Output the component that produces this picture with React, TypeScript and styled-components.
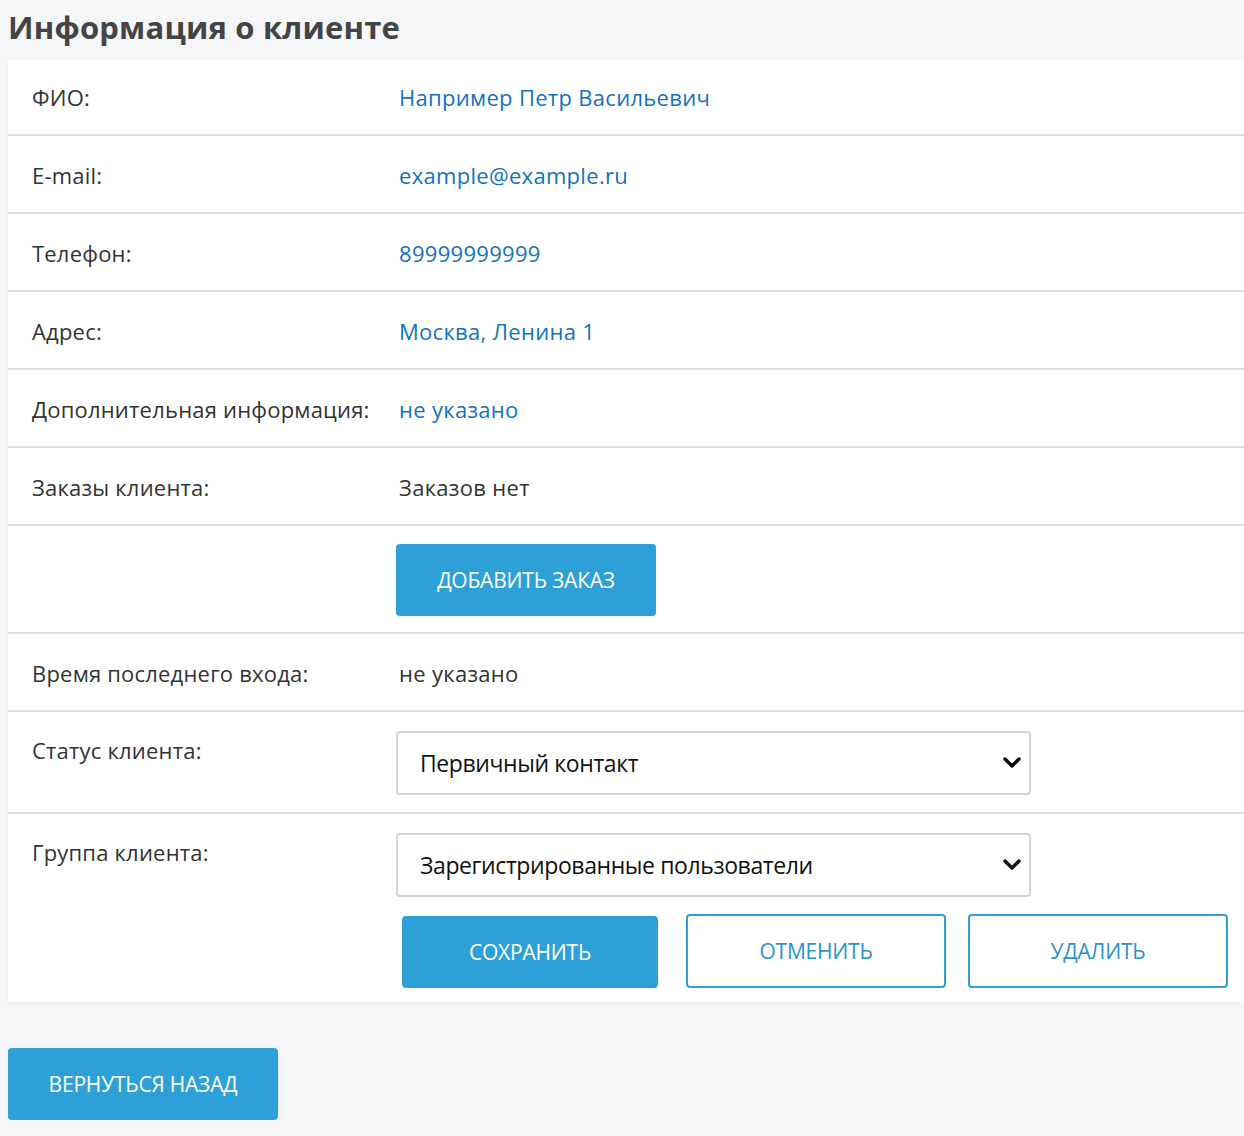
import React from "react";
import styled, { createGlobalStyle } from "styled-components";

const GlobalStyle = createGlobalStyle`
  html, body { margin: 0; padding: 0; background: #f4f6f8; }
  body { font-family: "Open Sans", "Liberation Sans", sans-serif; color: #333; }
`;

const Page = styled.div`
  padding: 8px 0 16px 8px;
  display: flex;
  flex-direction: column;
  align-items: flex-start;
`;

const Title = styled.h1`
  margin: 0 0 14px 0;
  font-family: "Open Sans", sans-serif;
  font-size: 31px;
  line-height: 38px;
  font-weight: 700;
  color: #444;
  letter-spacing: 0.2px;
`;

const Card = styled.div`
  align-self: stretch;
  background: #fff;
  box-shadow: 0 0 6px rgba(0, 0, 0, 0.05);
`;

const Row = styled.div<{ $last?: boolean; $pad?: string }>`
  display: grid;
  grid-template-columns: 364px 1fr;
  padding: ${(p) => p.$pad || "24px 0 22px 24px"};
  border-bottom: ${(p) => (p.$last ? "none" : "2px solid #dedede")};
`;

const Label = styled.div<{ $offset?: number }>`
  margin-top: ${(p) => p.$offset || 0}px;
  font-size: 22px;
  line-height: 30px;
  color: #333;
  letter-spacing: 0.2px;
`;

const Value = styled.div<{ $plain?: boolean }>`
  font-size: 22px;
  line-height: 30px;
  padding-left: 3px;
  color: ${(p) => (p.$plain ? "#333" : "#1271c4")};
  letter-spacing: 0.3px;
`;

const Controls = styled.div`
  display: flex;
  flex-direction: column;
  gap: 19px;
`;

const SelectBox = styled.div`
  width: 635px;
  height: 64px;
  box-sizing: border-box;
  border: 2px solid #d4d4d4;
  border-radius: 4px;
  display: flex;
  align-items: center;
  justify-content: space-between;
  padding: 0 8px 0 22px;
  font-size: 23px;
  color: #111;
  letter-spacing: -0.4px;
`;

const ButtonRow = styled.div`
  display: flex;
  gap: 22px;
  padding-left: 6px;
`;

const Button = styled.button<{ $outline?: boolean; $w?: number; $mr?: number }>`
  width: ${(p) => p.$w || 260}px;
  height: ${(p) => (p.$outline ? 74 : 72)}px;
  margin-top: ${(p) => (p.$outline ? -2 : 0)}px;
  margin-right: ${(p) => p.$mr || 0}px;
  box-sizing: border-box;
  border-radius: 4px;
  border: 2px solid #2ea0d8;
  background: ${(p) => (p.$outline ? "#fff" : "#2ea0d8")};
  color: ${(p) => (p.$outline ? "#2a93cc" : "#fff")};
  font-family: "Open Sans", sans-serif;
  font-size: 21px;
  text-transform: uppercase;
  letter-spacing: -0.2px;
  cursor: pointer;
`;

const BackWrap = styled.div`
  margin-top: 46px;
`;

const Chevron = () => (
  <svg width="18" height="12" viewBox="0 0 18 12">
    <path d="M2 2 L9 9 L16 2" fill="none" stroke="#111" strokeWidth="3.5" strokeLinecap="round" strokeLinejoin="round" />
  </svg>
);

const rows: { label: string; value: string; plain?: boolean }[] = [
  { label: "ФИО:", value: "Например Петр Васильевич" },
  { label: "E-mail:", value: "example@example.ru" },
  { label: "Телефон:", value: "89999999999" },
  { label: "Адрес:", value: "Москва, Ленина 1" },
  { label: "Дополнительная информация:", value: "не указано" },
  { label: "Заказы клиента:", value: "Заказов нет", plain: true },
];

export default function App() {
  return (
    <>
      <GlobalStyle />
      <Page>
        <Title>Информация о клиенте</Title>
        <Card>
          {rows.map((r, i) => (
            <Row key={r.label} $pad={i === 0 ? "22px 0 22px 24px" : undefined}>
              <Label>{r.label}</Label>
              <Value $plain={r.plain}>{r.value}</Value>
            </Row>
          ))}
          <Row $pad="18px 0 16px 24px">
            <div />
            <Button>Добавить заказ</Button>
          </Row>
          <Row>
            <Label>Время последнего входа:</Label>
            <Value $plain>не указано</Value>
          </Row>
          <Row $pad="19px 0 17px 24px">
            <Label $offset={4}>Статус клиента:</Label>
            <SelectBox>
              Первичный контакт
              <Chevron />
            </SelectBox>
          </Row>
          <Row $last $pad="19px 0 14px 24px">
            <Label $offset={4}>Группа клиента:</Label>
            <Controls>
              <SelectBox>
                Зарегистрированные пользователи
                <Chevron />
              </SelectBox>
              <ButtonRow>
                <Button $w={256} $mr={6}>Сохранить</Button>
                <Button $outline>Отменить</Button>
                <Button $outline>Удалить</Button>
              </ButtonRow>
            </Controls>
          </Row>
        </Card>
        <BackWrap>
          <Button $w={270}>Вернуться назад</Button>
        </BackWrap>
      </Page>
    </>
  );
}
